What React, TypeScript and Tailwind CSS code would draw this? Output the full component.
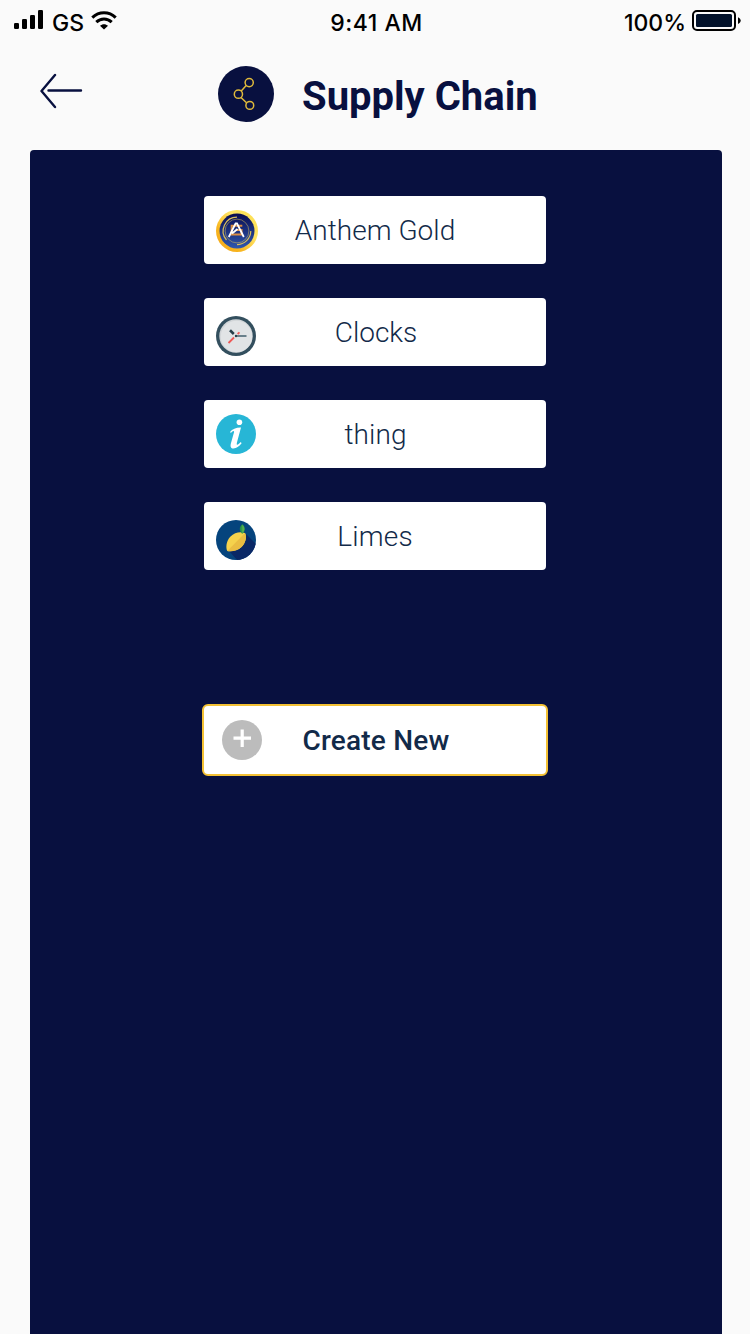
import type { ReactNode } from "react";

function SignalIcon() {
  return (
    <svg width="30" height="20" viewBox="0 0 30 20" className="shrink-0">
      <rect x="0" y="13" width="5" height="6" rx="1.2" />
      <rect x="8" y="9" width="5" height="10" rx="1.2" />
      <rect x="16" y="5" width="5" height="14" rx="1.2" />
      <rect x="24" y="0" width="5" height="19" rx="1.2" />
    </svg>
  );
}

function WifiIcon() {
  return (
    <svg width="26" height="19" viewBox="0 0 26 19" className="shrink-0" fill="none" stroke="#000" strokeWidth="3">
      <path d="M1.3 6.6C8 .1 18 .1 24.700 6.600" />
      <path d="M5.300 11.200C9.700 7 16.300 7 20.700 11.200" />
      <path d="M9 14.700C11.300 12.600 14.700 12.600 17 14.700L13 18.500Z" fill="#000" stroke="none" />
    </svg>
  );
}

function BatteryIcon() {
  return (
    <svg width="49" height="21" viewBox="0 0 49 21" className="shrink-0">
      <rect x="1" y="1" width="42" height="19" rx="4" fill="none" stroke="#000" strokeWidth="2" />
      <rect x="4" y="4" width="36" height="13" rx="1.500" fill="#02122b" />
      <path d="M46 7.200C49.600 8.600 49.600 12.600 46 14Z" />
    </svg>
  );
}

function BackArrow() {
  return (
    <svg width="43" height="36" viewBox="0 0 43 36" fill="none" stroke="#08103f" strokeWidth="2.400" strokeLinecap="round" strokeLinejoin="round">
      <path d="M15 2L1.500 18L15 34M8.500 17.500H41" />
    </svg>
  );
}

function ChainIcon() {
  return (
    <svg width="56" height="56" viewBox="0 0 56 56">
      <circle cx="28" cy="28" r="28" fill="#08103f" />
      <g fill="none" stroke="#dfb93b" strokeWidth="1.500">
        <circle cx="31.200" cy="16.600" r="4.100" />
        <circle cx="20.400" cy="28.200" r="4.100" />
        <circle cx="31.800" cy="39.400" r="3.900" />
        <path d="M28.200 19.600L23 25.200M23 31.500L28.500 36.800" />
      </g>
    </svg>
  );
}

function GoldCoinIcon() {
  return (
    <svg width="42" height="42" viewBox="0 0 42 42">
      <defs>
        <linearGradient id="coinRim" x1="0" y1="1" x2="1" y2="0">
          <stop offset="0" stopColor="#f3a51b" />
          <stop offset=".3" stopColor="#f8b51e" />
          <stop offset=".65" stopColor="#ffe566" />
          <stop offset="1" stopColor="#fbdc4a" />
        </linearGradient>
        <linearGradient id="coinFace" x1="0" y1="0" x2="0" y2="1">
          <stop offset="0" stopColor="#090b50" />
          <stop offset="1" stopColor="#3058ae" />
        </linearGradient>
      </defs>
      <circle cx="21" cy="21" r="21" fill="url(#coinRim)" />
      <circle cx="21" cy="21" r="17.500" fill="url(#coinFace)" />
      <g fill="none" stroke="#d7bd5c">
        <circle cx="21" cy="21" r="11.900" strokeWidth=".7" opacity=".75" />
        <path d="M21 7.200A13.800 13.800 0 0 0 10.500 30" strokeWidth="1.200" />
        <path d="M34.800 21A13.800 13.800 0 0 1 21 34.600" strokeWidth="1.200" />
        <path d="M26.300 15.700H15.700V24.500H25.500V20H20.500" stroke="#dc8d43" strokeWidth="2" />
      </g>
      <path d="M12.800 27L19.600 13.500H21L27.800 27M16 23.500L21.500 19" fill="none" stroke="#fff" strokeWidth="1.800" />
    </svg>
  );
}

function ClockIcon() {
  return (
    <svg width="40" height="40" viewBox="0 0 40 40">
      <circle cx="20" cy="20" r="20" fill="#334f5e" />
      <circle cx="20" cy="20" r="16.700" fill="#d1d5d8" />
      <circle cx="20.500" cy="20.500" r="15.700" fill="#e1e4e6" />
      <path d="M21 20H30.500" stroke="#5c7480" strokeWidth="1.800" />
      <path d="M14 14.300L17.800 18" stroke="#263f4b" strokeWidth="2.600" />
      <path d="M12.500 27L18 21.500M21.600 18L23.500 16.300" stroke="#ee5a58" strokeWidth="1.800" />
      <circle cx="20" cy="20" r="1.200" fill="#263f4b" />
    </svg>
  );
}

function InfoIcon() {
  return (
    <svg width="40" height="40" viewBox="0 0 40 40">
      <circle cx="20" cy="20" r="20" fill="#27b6d6" />
      <circle cx="23.400" cy="8.300" r="2.800" fill="#fff" />
      <path d="M14 18C16.500 15 20 13.400 25 13.500L21 28.200C20.400 30.700 21 31.300 22.300 30.300C23 29.800 24 28.900 24.800 28L25.600 29.200C23 32.500 20.400 34.300 17.500 34.500C14.700 34.500 14.200 32.300 14.800 29.700L18.100 18C18.200 16.300 16.500 17 15 18.900Z" fill="#fff" />
    </svg>
  );
}

function LemonIcon() {
  return (
    <svg width="40" height="40" viewBox="0 0 40 40">
      <defs>
        <clipPath id="lemonDisc">
          <circle cx="20" cy="20" r="20" />
        </clipPath>
      </defs>
      <circle cx="20" cy="20" r="20" fill="#05447d" />
      <path d="M28 12L42 26V42H23L12 30Z" fill="#0a2866" clipPath="url(#lemonDisc)" />
      <path d="M11.300 31C9.700 28 10 21 14.500 16.500C18.500 12 25 11.300 29 13C31 17 29.700 23 25.500 27C21.500 31 15 32 11.300 31Z" fill="#f5d24c" />
      <path d="M29 13C31 17 29.700 23 25.500 27C21.500 31 15 32 11.300 31Z" fill="#eabd42" />
      <path d="M26.200 13.500C23.200 10 24 6.800 26.300 4.600C29 7 29.200 11 26.200 13.500Z" fill="#2f9a47" stroke="#2f9a47" strokeWidth=".6" />
      <path d="M26.300 4.600C29 7 29.200 11 26.200 13.500Z" fill="#54ae50" />
    </svg>
  );
}

function PlusIcon() {
  return (
    <svg width="40" height="40" viewBox="0 0 40 40">
      <circle cx="20" cy="20" r="20" fill="#bcbcbc" />
      <path d="M11.500 18.200H29M20.200 9.500V27" stroke="#fff" strokeWidth="3.200" />
    </svg>
  );
}

function AssetButton({ icon, iconClass, labelClass, label }: { icon: ReactNode; iconClass: string; labelClass: string; label: string }) {
  return (
    <button className="grid h-[68px] w-[342px] grid-cols-[42px_1fr_42px] items-center rounded bg-white px-3 text-[28px] text-[#122a49]">
      <span className={iconClass}>{icon}</span>
      <span className={`whitespace-nowrap pt-[2px] text-center font-[350] leading-[66px] ${labelClass}`}>{label}</span>
    </button>
  );
}

export default function App() {
  return (
    <div className="flex h-[1334px] w-[750px] flex-col overflow-hidden bg-[#fafafa] font-['Roboto',sans-serif]">
      <div className="grid h-[46px] shrink-0 grid-cols-3 items-center font-['Inter',sans-serif] text-[23px] font-medium leading-[46px] text-black">
        <div className="flex items-center pl-3.5">
          <span className="-mt-[7px]"><SignalIcon /></span>
          <span className="ml-2 w-[39px] whitespace-nowrap">GS</span>
          <span className="-mt-[6px]"><WifiIcon /></span>
        </div>
        <span className="whitespace-nowrap pl-[3px] text-center tracking-[0.5px]">9:41 AM</span>
        <div className="flex items-center justify-end pr-[9px]">
          <span className="mr-[6px] whitespace-nowrap">100%</span>
          <span className="-mt-[5px]"><BatteryIcon /></span>
        </div>
      </div>

      <header className="flex h-[104px] shrink-0 items-start pl-10">
        <button aria-label="Back" className="mt-[27px]"><BackArrow /></button>
        <span className="ml-[135px] mt-5"><ChainIcon /></span>
        <h1 className="ml-7 mt-[21px] whitespace-nowrap text-[40px] font-bold leading-[60px] text-[#08103f]">Supply Chain</h1>
      </header>

      <main className="ml-[30px] flex w-[692px] flex-1 flex-col items-center rounded-t bg-[#08103f] pr-[2px] pt-[46px]">
        <div className="flex flex-col gap-[34px]">
          <AssetButton icon={<GoldCoinIcon />} iconClass="mt-[2px]" label="Anthem Gold" labelClass="tracking-[0.05px]" />
          <AssetButton icon={<ClockIcon />} iconClass="mt-2" label="Clocks" labelClass="pl-[2px]" />
          <AssetButton icon={<InfoIcon />} iconClass="" label="thing" labelClass="pl-px tracking-[0.1px]" />
          <AssetButton icon={<LemonIcon />} iconClass="mt-2" label="Limes" labelClass="tracking-[0.2px]" />
        </div>
        <button className="mt-[134px] grid h-[72px] w-[346px] grid-cols-[40px_1fr_40px] items-center rounded-md border-2 border-[#f3c134] bg-white px-[18px] text-[28px] font-medium text-[#122a49]">
          <PlusIcon />
          <span className="whitespace-nowrap pl-[2px] pt-[2px] text-center leading-[66px] tracking-[0.2px]">Create New</span>
        </button>
      </main>
    </div>
  );
}
